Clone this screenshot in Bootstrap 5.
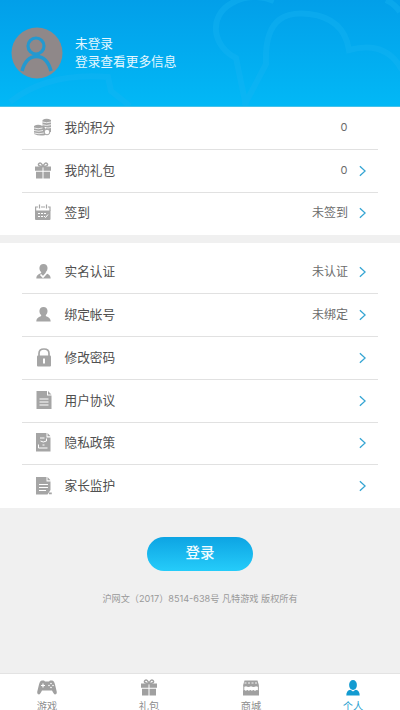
<!DOCTYPE html>
<html lang="zh-CN">
<head>
<meta charset="utf-8">
<meta name="viewport" content="width=device-width, initial-scale=1">
<title>个人</title>
<link href="https://cdn.jsdelivr.net/npm/bootstrap@5.3.0/dist/css/bootstrap.min.css" rel="stylesheet">
<style>
body{font-family:"Noto Sans CJK SC",sans-serif;background:#f0f0f0;color:#505050;font-size:12.7px;line-height:18px}
.app{height:710px}
.hero{height:107px;background:linear-gradient(#029fe9,#02b8f6);border-bottom:1px solid #45c2ea;color:#e4f7ff;padding:0 0 3px 11px}
.clouds{z-index:0}
.avatar{width:52px;height:52px;margin-top:2px}
.who{margin-left:12px;z-index:1;padding-top:1px}
.panel{padding:0 22px}
.panel-b{margin-top:8px;padding-top:8px}
.line-item{height:42.8px;border-bottom:1px solid #e1e1e1;padding:0 12px 0 10px}
.line-item:last-child{border-bottom-color:transparent}
.ico{width:22px;height:22px;fill:#a5a5a5;flex:none}
.label{margin-left:10.500px;padding-bottom:2px}
.value{font-size:12px;color:#6c6c6c;padding-bottom:2px}
.zero{font-family:Inter,sans-serif;font-size:11px;padding-right:.5px}
.chev{width:7px;height:12px;margin-left:11px;fill:none;stroke:#35a5d3;stroke-width:1.5}
.chev.off{visibility:hidden}
.login{width:106px;height:34px;margin-top:29px;border:0;background:linear-gradient(#0da4e3,#25ccfa);color:#f2fcff;font-size:14.5px;padding:0 0 4px;line-height:20px}
.legal{margin-top:19px;font-family:Inter,"Noto Sans CJK SC",sans-serif;font-size:9.15px;color:#999}
.tabs{height:37px;border-top:1px solid #e3e3e3}
.tabs .row{margin:0 -4px}
.tab{padding:5px 0 0;font-size:10.2px;line-height:14px;color:#8c8c8c;height:37px}
.tab svg{width:20px;height:18px;fill:#a0a0a0;margin-bottom:2px;flex:none}
.tab.on{color:#2a9fd0}
.tab.on svg{fill:#139bd1}
</style>
</head>
<body>
<svg class="d-none" xmlns="http://www.w3.org/2000/svg">
<symbol id="gift" viewBox="0 0 22 22"><path d="M3 7h7.500v4.300H3zM11.500 7H19v4.300h-7.500zM4 12.300h6.500V19H4zM11.500 12.300H18V19h-6.500z"/><path d="M11 7C7 7 5.500 5.500 7 4s3 .5 4 3C12 4.500 13.500 2.500 15 4s0 3-4 3z" fill="none" stroke="currentColor" stroke-width="1.500"/></symbol>
<symbol id="person" viewBox="0 0 22 22"><path d="M11.500 3c5.200 0 4.800 6.500 2.200 8.200.3 2 5 1.300 5 6.300H4.300c0-5 4.700-4.300 5-6.300C6.700 9.500 6.300 3 11.500 3z"/></symbol>
<symbol id="chev" viewBox="0 0 8 13"><path d="M1 1l6 5.500L1 12"/></symbol>
</svg>
<main class="app d-flex flex-column overflow-hidden">
<header class="hero position-relative d-flex align-items-center flex-shrink-0">
<svg class="clouds position-absolute top-0 start-0 w-100 h-100" viewBox="0 0 400 106" preserveAspectRatio="none" fill="none" stroke="#18b5f3" stroke-width="6" opacity=".38"><path d="M246 106L236 58C212 46 208 16 232 3Q252-8 274 1M244 106L266 64C264 14 290 12 309 14Q344 18 349 50Q386 40 402 70M386 0Q395 4 400 12M10 102Q48 72 108 77L111 91 130 106"/></svg>
<svg class="avatar position-relative" viewBox="0 0 52 52"><circle cx="26" cy="26" r="25.500" fill="#8f8889"/><circle cx="25" cy="19" r="8" fill="none" stroke="#2499d0" stroke-width="3.200"/><path d="M11 44Q15 29.500 25.500 29.500T40 44" fill="none" stroke="#2499d0" stroke-width="3.500"/></svg>
<div class="who position-relative"><div>未登录</div><div>登录查看更多信息</div></div>
</header>

<section class="panel bg-white flex-shrink-0">
<div class="line-item d-flex align-items-center"><svg class="ico" viewBox="0 0 22 22"><path d="M10.500 3q4-2.500 8.500 0v12h-5v-5h-3.500zM2 9q4-2.500 8.500 0l3 2v7q-6 1.500-11.500-1z"/><path d="M10.500 5q4 1.500 8.500 0M10.500 7.700q4 1.500 8.500 0M13 10.500q3 1 6 0M2 11q4 1.500 8.500 0M2 13.500q5 1.500 9 0M2 16q5 1.500 10 0" fill="none" stroke="#fff" stroke-width=".8"/><circle cx="15" cy="15" r="2.800" fill="#fff" stroke="#a5a5a5"/></svg><span class="label">我的积分</span><span class="value zero ms-auto">0</span><svg class="chev off"><use href="#chev"/></svg></div>
<div class="line-item d-flex align-items-center"><svg class="ico" color="#a5a5a5" viewBox="0 .5 22 22"><use href="#gift" width="22" height="22"/></svg><span class="label">我的礼包</span><span class="value zero ms-auto">0</span><svg class="chev"><use href="#chev"/></svg></div>
<div class="line-item d-flex align-items-center"><svg class="ico" viewBox="0 0 22 22"><path d="M3 8.500h15.500v8.500q0 1-1 1H4q-1 0-1-1z"/><path d="M3.600 9V5H6M9 5h4M16 5h2v4M7.500 2.500v4M14.500 2.500v4" fill="none" stroke="#a5a5a5" stroke-width="1.200"/><path d="M6 11.500h9M6 14.500h5" stroke="#fff" stroke-width="1.100" stroke-dasharray="2 1"/><path d="M12 14l1.500 1.500L16 12.500" fill="none" stroke="#fff"/></svg><span class="label">签到</span><span class="value ms-auto">未签到</span><svg class="chev"><use href="#chev"/></svg></div>
</section>

<section class="panel panel-b bg-white flex-shrink-0">
<div class="line-item d-flex align-items-center"><svg class="ico" viewBox="0 0 22 22"><use href="#person" width="22" height="22"/><path d="M8.500 13.500l2.500 2.500 5.500-6" fill="none" stroke="#fff" stroke-width="1.700"/></svg><span class="label">实名认证</span><span class="value ms-auto">未认证</span><svg class="chev"><use href="#chev"/></svg></div>
<div class="line-item d-flex align-items-center"><svg class="ico"><use href="#person"/></svg><span class="label">绑定帐号</span><span class="value ms-auto">未绑定</span><svg class="chev"><use href="#chev"/></svg></div>
<div class="line-item d-flex align-items-center"><svg class="ico" viewBox="0 0 22 22"><rect x="5" y="8.500" width="14" height="11" rx="1"/><path d="M7 9V6.500q0-4.500 5-4.500t5 4.500V9" fill="none" stroke="#a5a5a5" stroke-width="1.700"/><path d="M11 11.500h2v5h-2z" fill="#fff"/></svg><span class="label">修改密码</span><svg class="chev ms-auto"><use href="#chev"/></svg></div>
<div class="line-item d-flex align-items-center"><svg class="ico" viewBox="0 0 22 22"><path d="M4.500 1h10.500v4.500h4.500v13.500h-15zM16 1l3.500 3.500H16z"/><path d="M7.500 9h9M7.500 12h9M7.500 15h9" stroke="#fff" stroke-width="1.100"/></svg><span class="label">用户协议</span><svg class="chev ms-auto"><use href="#chev"/></svg></div>
<div class="line-item d-flex align-items-center"><svg class="ico" viewBox="0 0 22 22"><path d="M4 1h10.500v4.500h4V19.500H4zM15.500 1l3 3.200h-3z"/><path d="M8 6h4.500M8.500 9q2.500 2 6 0V6.500M6.500 12.500v3.500h9M10.500 13h2" fill="none" stroke="#fff"/></svg><span class="label">隐私政策</span><svg class="chev ms-auto"><use href="#chev"/></svg></div>
<div class="line-item d-flex align-items-center"><svg class="ico" viewBox="0 0 22 22"><path d="M4 2h10.500v4.500h4V15l-3 4.500H4zM15.500 2l3 3.200h-3zM17 17.500h2.800v1.800H17z"/><path d="M7 9.500h9M7 12.500h9M7 15.500h7" stroke="#fff" stroke-width="1.100"/></svg><span class="label">家长监护</span><svg class="chev ms-auto"><use href="#chev"/></svg></div>
</section>

<button class="login btn rounded-pill mx-auto flex-shrink-0 fw-medium" type="button">登录</button>
<p class="legal text-center mb-0">沪网文（2017）8514-638号 凡特游戏 版权所有</p>

<nav class="tabs bg-white mt-auto flex-shrink-0 overflow-hidden">
<div class="row g-0 text-center">
<div class="tab col d-flex flex-column align-items-center"><svg viewBox="0 0 20 18"><path d="M5 1.500h2l1 1h4l1-1h2q2 0 3 4l1.700 7q.5 3-1.700 3-1 0-3-4H5q-2 4-3 4-2.200 0-1.700-3L2 5.500q1-4 3-4z"/><path d="M6 4.500v4M4 6.500h4" stroke="#fff" stroke-width="1.200"/><g fill="#fff"><circle cx="14" cy="4.500" r=".8"/><circle cx="14" cy="8.500" r=".8"/><circle cx="12" cy="6.500" r=".8"/><circle cx="16" cy="6.500" r=".8"/></g></svg>游戏</div>
<div class="tab col d-flex flex-column align-items-center"><svg color="#a0a0a0" viewBox="1 2.500 20 18"><use href="#gift" width="22" height="22"/></svg>礼包</div>
<div class="tab col d-flex flex-column align-items-center"><svg viewBox="0 0 20 18"><path d="M3.500 1.500h13L18 6.500q-1 2-3 .8-2.500 1.500-5 0-2.500 1.500-5 0-2 1.200-3-.8zM2 12q1-2 3 0 1-2 3 0 1-2 3 0 1-2 3 0 2-2 4 0v4.500H2z"/><path d="M2.800 7v7M17.400 7v7" stroke="#a0a0a0"/><path d="M3.500 4h13" stroke="#fff" stroke-width=".9" stroke-dasharray="2 1.500"/></svg>商城</div>
<div class="tab on col d-flex flex-column align-items-center"><svg viewBox="0 0 20 18"><ellipse cx="10" cy="6" rx="3.900" ry="4.900"/><path d="M3.300 16.500q0-5 4.200-5.700l2.500 1.700 2.500-1.700q4.200.7 4.200 5.700z"/></svg>个人</div>
</div>
</nav>
</main>
<script src="https://cdn.jsdelivr.net/npm/bootstrap@5.3.0/dist/js/bootstrap.bundle.min.js"></script>
</body>
</html>
